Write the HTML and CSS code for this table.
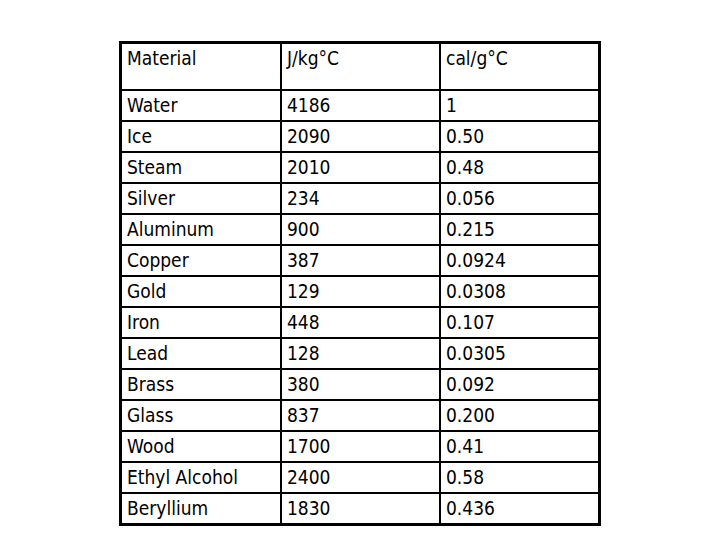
FILE: index.html
```html
<!DOCTYPE html>
<html>
<head>
<meta charset="utf-8">
<link rel="stylesheet" href="styles.css">
</head>
<body>
<div class="sheet">
  <div class="grid">
    <div class="cell head">Material</div><div class="cell head">J/kg°C</div><div class="cell head">cal/g°C</div>
    <div class="cell">Water</div><div class="cell">4186</div><div class="cell">1</div>
    <div class="cell">Ice</div><div class="cell">2090</div><div class="cell">0.50</div>
    <div class="cell">Steam</div><div class="cell">2010</div><div class="cell">0.48</div>
    <div class="cell">Silver</div><div class="cell">234</div><div class="cell">0.056</div>
    <div class="cell">Aluminum</div><div class="cell">900</div><div class="cell">0.215</div>
    <div class="cell">Copper</div><div class="cell">387</div><div class="cell">0.0924</div>
    <div class="cell">Gold</div><div class="cell">129</div><div class="cell">0.0308</div>
    <div class="cell">Iron</div><div class="cell">448</div><div class="cell">0.107</div>
    <div class="cell">Lead</div><div class="cell">128</div><div class="cell">0.0305</div>
    <div class="cell">Brass</div><div class="cell">380</div><div class="cell">0.092</div>
    <div class="cell">Glass</div><div class="cell">837</div><div class="cell">0.200</div>
    <div class="cell">Wood</div><div class="cell">1700</div><div class="cell">0.41</div>
    <div class="cell">Ethyl Alcohol</div><div class="cell">2400</div><div class="cell">0.58</div>
    <div class="cell">Beryllium</div><div class="cell">1830</div><div class="cell">0.436</div>
  </div>
</div>
</body>
</html>
```
FILE: styles.css
```css
html, body {
  margin: 0;
  padding: 0;
  background: #ffffff;
}
.sheet {
  width: 720px;
  height: 540px;
  padding: 41px 0 0 119px;
  box-sizing: border-box;
}
.grid {
  display: grid;
  width: 482px;
  box-sizing: border-box;
  grid-template-columns: 158px 157px 157px;
  grid-template-rows: 45px repeat(14, 29px);
  gap: 2px;
  padding: 3px;
  background: #000;
}
.cell {
  background: #fff;
  font-family: "DejaVu Sans Condensed", "DejaVu Sans", sans-serif;
  font-stretch: condensed;
  font-size: 19px;
  line-height: 21px;
  color: #000;
  padding: 0 0 0 5px;
  display: flex;
  align-items: center;
}
.cell.head {
  align-items: flex-start;
  padding-top: 4px;
}
```
